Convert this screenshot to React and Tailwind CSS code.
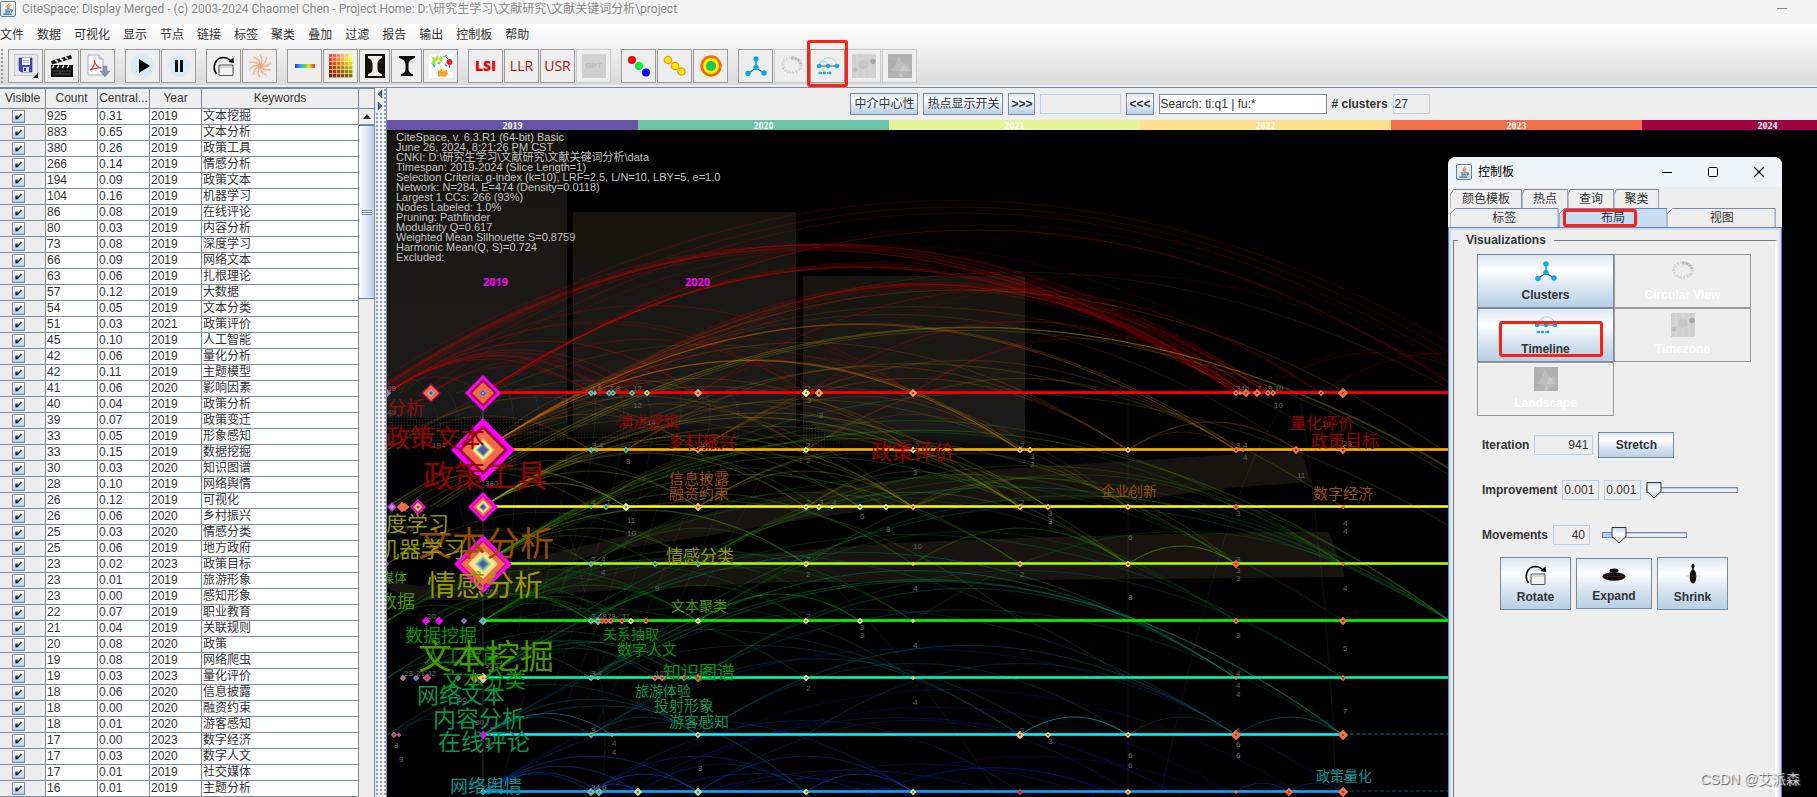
import React from "react";

const KEYWORDS = [
  [925, "0.31", 2019, "文本挖掘"], [883, "0.65", 2019, "文本分析"], [380, "0.26", 2019, "政策工具"],
  [266, "0.14", 2019, "情感分析"], [194, "0.09", 2019, "政策文本"], [104, "0.16", 2019, "机器学习"],
  [86, "0.08", 2019, "在线评论"], [80, "0.03", 2019, "内容分析"], [73, "0.08", 2019, "深度学习"],
  [66, "0.09", 2019, "网络文本"], [63, "0.06", 2019, "扎根理论"], [57, "0.12", 2019, "大数据"],
  [54, "0.05", 2019, "文本分类"], [51, "0.03", 2021, "政策评价"], [45, "0.10", 2019, "人工智能"],
  [42, "0.06", 2019, "量化分析"], [42, "0.11", 2019, "主题模型"], [41, "0.06", 2020, "影响因素"],
  [40, "0.04", 2019, "政策分析"], [39, "0.07", 2019, "政策变迁"], [33, "0.05", 2019, "形象感知"],
  [33, "0.15", 2019, "数据挖掘"], [30, "0.03", 2020, "知识图谱"], [28, "0.10", 2019, "网络舆情"],
  [26, "0.12", 2019, "可视化"], [26, "0.06", 2020, "乡村振兴"], [25, "0.03", 2020, "情感分类"],
  [25, "0.06", 2019, "地方政府"], [23, "0.02", 2023, "政策目标"], [23, "0.01", 2019, "旅游形象"],
  [23, "0.00", 2019, "感知形象"], [22, "0.07", 2019, "职业教育"], [21, "0.04", 2019, "关联规则"],
  [20, "0.08", 2020, "政策"], [19, "0.08", 2019, "网络爬虫"], [19, "0.03", 2023, "量化评价"],
  [18, "0.06", 2020, "信息披露"], [18, "0.00", 2020, "融资约束"], [18, "0.01", 2020, "游客感知"],
  [17, "0.00", 2023, "数字经济"], [17, "0.03", 2020, "数字人文"], [17, "0.01", 2019, "社交媒体"],
  [16, "0.01", 2019, "主题分析"],
];

const MENUS = ["文件", "数据", "可视化", "显示", "节点", "链接", "标签", "聚类", "叠加", "过滤", "报告", "输出", "控制板", "帮助"];

const SUMMARY = [
  "CiteSpace, v. 6.3.R1 (64-bit) Basic",
  "June 26, 2024, 8:21:26 PM CST",
  "CNKI: D:\\研究生学习\\文献研究\\文献关键词分析\\data",
  "Timespan: 2019-2024 (Slice Length=1)",
  "Selection Criteria: g-index (k=10), LRF=2.5, L/N=10, LBY=5, e=1.0",
  "Network: N=284, E=474 (Density=0.0118)",
  "Largest 1 CCs: 266 (93%)",
  "Nodes Labeled: 1.0%",
  "Pruning: Pathfinder",
  "Modularity Q=0.617",
  "Weighted Mean Silhouette S=0.8759",
  "Harmonic Mean(Q, S)=0.724",
  "Excluded:",
];

/* ---------- icons ---------- */

function JavaIcon() {
  return (
    <svg viewBox="0 0 16 16" className="size-4 shrink-0" aria-hidden="true">
      <defs>
        <linearGradient id="jv" x1="0" y1="0" x2="0" y2="1">
          <stop offset="0" stopColor="#fdfdfd" />
          <stop offset="1" stopColor="#cfdbe6" />
        </linearGradient>
      </defs>
      <rect x=".5" y=".5" width="15" height="15" rx="1.5" fill="url(#jv)" stroke="#6b8196" />
      <path d="M9 2.200c.6 1.400-2.600 2.200-1.800 4.100.3.700.9 1 .7 1.700M10.300 4.400C9 5 8.500 5.600 9 6.400c.3.600.1 1-.3 1.500" fill="none" stroke="#e87722" strokeWidth="1.100" />
      <path d="M4.800 9h5.800M5.300 10.900h4.800M3.600 13.200h7.800M10.600 9c2.400-.5 2.300 1.700.2 2.200" fill="none" stroke="#3f6a90" strokeWidth="1.200" />
    </svg>
  );
}

function Ic({ children, className = "size-6", viewBox = "0 0 24 24" }) {
  return <svg viewBox={viewBox} className={className} aria-hidden="true">{children}</svg>;
}

function SaveIcon() {
  return (
    <Ic>
      <rect x="0" y="0" width="24" height="24" fill="#ececec" />
      <rect x=".5" y=".5" width="23" height="21" fill="#e9e9ec" stroke="#c4c4c4" />
      <path d="M5 4h13v14H7l-2-2z" fill="#4448c8" stroke="#26268a" strokeWidth=".6" />
      <rect x="8" y="4" width="8" height="7" fill="#f4f4fa" />
      <path d="M9 6.500h6M9 8.500h6" stroke="#9a9ac0" strokeWidth=".8" />
      <rect x="9" y="13" width="6" height="5" fill="#dcdcf0" />
      <rect x="10" y="14" width="2" height="3" fill="#26268a" />
      <path d="M24 19v5h-5z" fill="#000" />
    </Ic>
  );
}

function ClapperIcon() {
  return (
    <Ic>
      <rect x="1" y="11" width="22" height="12" fill="#111" />
      <path d="M1 7 21 1l1 3.500L2 10.500z" fill="#111" />
      <path d="m5 6 3 2M10 4.500l3 2M15 3l3 2" stroke="#eee" strokeWidth="1.600" />
      <path d="M4 11.500l-2 2.500M9 11.500 7 14M14 11.500 12 14M19 11.500 17 14" stroke="#eee" strokeWidth="1.300" />
      <path d="M3 17h18M3 20h18M10 17v3" stroke="#777" strokeWidth=".6" />
    </Ic>
  );
}

function PdfIcon() {
  return (
    <Ic>
      <path d="M2 1h11l4 4v16H2z" fill="#f6f7fb" stroke="#aab0be" />
      <path d="M13 1v4h4" fill="#dfe3ec" stroke="#aab0be" />
      <path d="M4 16c3-2 5-6 4.500-10 .5 5 3 7.500 7 8-4-.5-8 .3-11.500 2z" fill="none" stroke="#e0504c" strokeWidth="1.300" />
      <path d="M17 12h4v5h3l-5 6-5-6h3z" fill="#8796ab" stroke="#6f7e94" strokeWidth=".5" />
    </Ic>
  );
}

function PlayIcon() {
  return (
    <Ic>
      <circle cx="11" cy="12" r="12" fill="#d8ecf3" />
      <path d="M8 5v14l11-7z" fill="#000" />
    </Ic>
  );
}

function PauseIcon() {
  return (
    <Ic>
      <circle cx="12" cy="12" r="11" fill="#d8ecf3" />
      <path d="M8 6h3v12H8zM13 6h3v12h-3z" fill="#111" />
    </Ic>
  );
}

function RotateIcon() {
  return (
    <Ic>
      <path d="M4.500 20C0 14 2.500 4 11 3.500c4 0 6.500 1.500 9 4.500" fill="none" stroke="#000" strokeWidth="1.700" />
      <path d="m21.500 3.500.5 5.500-5.500-1z" fill="#000" />
      <rect x="7" y="11" width="14" height="10.500" rx="1" fill="#f3f3f3" stroke="#555" strokeWidth="1.100" />
      <path d="M7.500 13h13" stroke="#bbb" />
    </Ic>
  );
}

function SwirlIcon() {
  return (
    <Ic>
      {[0, 36, 72, 108, 144, 180, 216, 252, 288, 324].map((a) => (
        <path key={a} d="M12 12C14 9 15 5 12 .8" transform={`rotate(${a} 12 12)`} fill="none" stroke="#f0b48c" strokeWidth="1.500" />
      ))}
      <circle cx="12" cy="12" r="2.500" fill="#eda878" />
    </Ic>
  );
}

function SpectrumIcon() {
  return (
    <Ic>
      <defs>
        <linearGradient id="spec">
          <stop offset="0" stopColor="#3a34c8" /><stop offset=".3" stopColor="#22b4e8" />
          <stop offset=".5" stopColor="#5fd35a" /><stop offset=".7" stopColor="#f2e02c" /><stop offset="1" stopColor="#e0301e" />
        </linearGradient>
      </defs>
      <rect x="2" y="10" width="20" height="4" fill="url(#spec)" />
    </Ic>
  );
}

function PaletteIcon() {
  const cells = [];
  for (let r = 0; r < 6; r++)
    for (let c = 0; c < 6; c++) {
      const k = r < 2 ? 1 : 1 - (r - 1) * 0.13;
      const red = Math.round(255 * k);
      const green = Math.round((60 + c * 39) * k);
      const blue = r < 2 ? 80 - r * 40 : 0;
      cells.push(<rect key={`${r}${c}`} x={c * 4} y={r * 4} width="3.400" height="3.400" fill={`rgb(${red},${green},${blue})`} />);
    }
  return <Ic>{cells}</Ic>;
}

const VaseLight = () => (
  <Ic className="h-6 w-5" viewBox="2 0 20 24">
    <rect x="2" width="20" height="24" fill="#14100c" />
    <path d="M5 2h14v2c-3 1-4.500 3-4.500 6v5c0 2.500 1.500 4.500 4.500 5v2H5v-2c3-.5 4.500-2.500 4.500-5v-5c0-3-1.500-5-4.500-6z" fill="#f5f1ea" />
  </Ic>
);
const VaseDark = () => (
  <Ic className="h-6 w-5" viewBox="2 0 20 24">
    <path d="M4 2h16v2c-4 1-6.500 3.500-6.500 6v5c0 2.500 1.500 4.500 4.500 5.500V22H6v-1.500c3-1 4.500-3 4.500-5.500v-5C10.500 7.500 8 5 4 4z" fill="#0a0a0a" />
  </Ic>
);

function SplashIcon() {
  return (
    <Ic>
      <rect width="24" height="24" fill="#fff" />
      <path d="m2 2 4 2 3-3 1 4-4 3 1 3-5-1 2-4zM11 2l3 2-1 4-3-2z" fill="#a4e638" />
      <circle cx="20.500" cy="8" r="3" fill="#ee1c25" /><path d="m17 3 2 2M20 14l1-3" stroke="#ee1c25" />
      <path d="m4 10 2 3M15 3l3-2M16 10l2 2" stroke="#29abe2" strokeWidth="1.600" />
      <path d="m9 17 3-2 2 2 4-1 1 4-3 3-4-1-3 1zM18 15l2 2" fill="#f7a428" />
      <circle cx="10" cy="9" r="1.500" fill="#7ac943" />
    </Ic>
  );
}

const NodesRgb = () => <Ic><circle cx="5" cy="6" r="4" fill="#ef0012" /><circle cx="12" cy="12" r="4" fill="#00ee2d" /><circle cx="19" cy="18.500" r="4" fill="#0d00ee" /></Ic>;
const NodesYellow = () => <Ic><g fill="#ffee00" stroke="#f7941d" strokeWidth="1.300"><circle cx="5" cy="6" r="3.700" /><circle cx="12" cy="12" r="3.700" /><circle cx="18.500" cy="17.500" r="3.700" /></g></Ic>;
const TargetIcon = () => <Ic><circle cx="12" cy="12" r="10.700" fill="#f26a00" /><circle cx="12" cy="12" r="8" fill="#ffef00" /><circle cx="12" cy="12" r="5" fill="#1fc45d" /></Ic>;

const ClustersIcon = () => (
  <Ic>
    <path d="M12 5v9l-8 5.500M12 14l8 5" fill="none" stroke="#4a4a4a" strokeWidth="1.100" />
    <g fill="#03aaf2"><circle cx="12" cy="5" r="2.700" /><circle cx="12" cy="13.500" r="2.700" /><circle cx="4" cy="19.500" r="2.700" /><circle cx="20" cy="19" r="2.700" /></g>
  </Ic>
);

const CircularIcon = () => (
  <Ic>
    <ellipse cx="12" cy="11" rx="9" ry="7" fill="none" stroke="#dadada" strokeWidth="3" strokeDasharray="2 1.500" />
    <ellipse cx="12" cy="11" rx="10" ry="8" fill="none" stroke="#c9c9c9" strokeWidth="1.500" strokeDasharray="1 2" />
    <path d="M11 4c5 0 9 2 9.500 6" fill="none" stroke="#b9b9b9" strokeWidth="3" strokeDasharray="2.500 1" />
  </Ic>
);

const TimelineIcon = () => (
  <Ic>
    <path d="M3 11C6 2 18 1 21 11M3 11c2-5 7-5 9 0" fill="none" stroke="#7cc7e0" strokeWidth=".9" strokeDasharray="2 .7" />
    <path d="M2 12h20" stroke="#555" /><path d="M4 19h10" stroke="#555" strokeDasharray="2 1.500" />
    <g fill="#03aaf2"><circle cx="3" cy="12" r="2.200" /><circle cx="12" cy="12" r="2.200" /><circle cx="21" cy="12" r="2.200" /><circle cx="4" cy="19" r="1.400" /><circle cx="8.500" cy="19" r="1.400" /><circle cx="14" cy="19" r="1.400" /></g>
  </Ic>
);

const TimezoneIcon = () => (
  <Ic>
    <rect width="24" height="24" fill="#d0d0d0" /><path d="M5 0v24M18 0v24M12 0v24" stroke="#dadada" />
    <circle cx="11.500" cy="10.500" r="4" fill="#c6c6c6" stroke="#bcbcbc" strokeWidth=".6" /><circle cx="21" cy="7.500" r="2.800" fill="#a8a8a8" /><circle cx="3" cy="16" r="2.500" fill="#bebebe" />
  </Ic>
);

const LandscapeIcon = () => (
  <Ic>
    <rect width="24" height="24" fill="#b0b0b0" />
    <path d="m11 2 5 9 4-2 3 9-10 3L3 16l4-4z" fill="#bdbdbd" /><path d="m16 9 5 9h-9zM12 18l3 5h-5z" fill="#c8c8c8" /><path d="M0 18h24M0 6l8 3" stroke="#a6a6a6" strokeWidth=".7" />
  </Ic>
);

const ExpandIcon = () => (
  <Ic><ellipse cx="12" cy="6.500" rx="4.500" ry="2" fill="#000" /><path d="M10.500 6h3v5h-3z" fill="#000" /><ellipse cx="12" cy="12.500" rx="11.500" ry="4.200" fill="#0b0b0b" /><path d="M0 12.500h24" stroke="#8a1c1c" strokeWidth=".5" /></Ic>
);
const ShrinkIcon = () => (
  <Ic><ellipse cx="12" cy="3" rx="1.600" ry="2.600" fill="#000" /><path d="M11.300 3h1.400v8h-1.400z" fill="#000" /><ellipse cx="12" cy="13.500" rx="3.300" ry="7" fill="#0b0b0b" /><path d="M5 13h14" stroke="#e06060" strokeWidth=".4" /></Ic>
);

const Lbl = ({ children, className }) => <span className={className}>{children}</span>;

const TOOL_GROUPS = [
  [["Save", <SaveIcon />], ["Movie", <ClapperIcon />], ["PDF", <PdfIcon />]],
  [["Play", <PlayIcon />], ["Pause", <PauseIcon />]],
  [["Rotate", <RotateIcon />], ["Swirl", <SwirlIcon />]],
  [["Spectrum", <SpectrumIcon />], ["Palette", <PaletteIcon />], ["Light background", <VaseLight />, "narrow"], ["Dark background", <VaseDark />, "narrow"], ["Splash", <SplashIcon />]],
  [
    ["LSI", <Lbl className="font-['Open_Sans',sans-serif] text-sm font-extrabold text-[#f00000]">LSI</Lbl>],
    ["LLR", <Lbl className="font-['Open_Sans',sans-serif] text-sm font-medium text-[#b01010]">LLR</Lbl>],
    ["USR", <Lbl className="font-['Open_Sans',sans-serif] text-sm font-medium text-[#b01010]">USR</Lbl>],
    ["GPT", <Lbl className="grid size-6 place-items-center bg-[#d0d0d0] text-[8px] font-bold text-[#bcbcbc]">GPT</Lbl>, "off"],
  ],
  [["Node colors", <NodesRgb />], ["Yellow nodes", <NodesYellow />], ["Rings", <TargetIcon />]],
  [["Clusters", <ClustersIcon />], ["Circular view", <CircularIcon />, "off"], ["Timeline", <TimelineIcon />, "marked"], ["Timezone", <TimezoneIcon />, "off"], ["Landscape", <LandscapeIcon />, "off"]],
];

function Toolbar() {
  return (
    <div className="flex items-center gap-[10px] pt-1 whitespace-nowrap">
      <div className="-mr-[6px] h-9 w-1 bg-[radial-gradient(#9a9a9a_1px,transparent_1px)] bg-[size:4px_4px]" />
      {TOOL_GROUPS.map((group, i) => (
        <div key={i} className="flex gap-px">
          {group.map(([name, icon, kind]) => (
            <button
              key={name}
              aria-label={name}
              disabled={kind === "off"}
              className={`relative grid h-[34px] shrink-0 place-items-center border bg-[#eee] ${kind === "narrow" ? "w-[31px]" : "w-[35px]"} ${kind === "off" ? "border-[#c8c8c8]" : "border-[#999]"}`}
            >
              {icon}
              {kind === "marked" && <span className="pointer-events-none absolute -inset-x-1 -top-[10px] -bottom-[5px] z-10 rounded-[3px] border-[3px] border-[#fb2213]" />}
            </button>
          ))}
        </div>
      ))}
    </div>
  );
}

/* ---------- keyword table ---------- */

const HEAD = "h-5 border-r border-b border-[#7a8a99] p-0 text-center font-normal leading-[19px]";
const CELL = "h-4 border-r border-b border-[#7a8a99] bg-white p-0 pl-px leading-[15px]";

function KeywordTable() {
  return (
    <section className="flex w-[375px] shrink-0 overflow-hidden border-t border-r border-[#7a8a99] bg-[#eee]">
      <table className="w-[359px] shrink-0 table-fixed border-separate border-spacing-0 self-start text-xs leading-[15px] text-[#333]">
        <colgroup>
          <col className="w-[46px]" /><col className="w-[52px]" /><col className="w-[52px]" /><col className="w-[52px]" /><col />
        </colgroup>
        <thead>
          <tr>
            <th className={HEAD}>Visible</th><th className={HEAD}>Count</th><th className={HEAD}>Central...</th><th className={HEAD}>Year</th><th className={HEAD}>Keywords</th>
          </tr>
        </thead>
        <tbody>
          {KEYWORDS.map(([count, centrality, year, word]) => (
            <tr key={word}>
              <td className="h-4 border-r border-b border-[#7a8a99] p-0">
                <label className="mx-auto grid w-[13px] -translate-x-1">
                  <input type="checkbox" defaultChecked aria-label={word} className="peer col-start-1 row-start-1 size-[13px] appearance-none border border-[#7a8a99] bg-linear-to-b from-white to-[#b8cfe5]" />
                  <svg viewBox="0 0 13 13" className="invisible col-start-1 row-start-1 size-[13px] peer-checked:visible" aria-hidden="true">
                    <path d="M4 5.500v4M5 5.500v4M5.500 8.500 9.500 4" stroke="#2a2a2a" strokeWidth="1.300" fill="none" />
                  </svg>
                </label>
              </td>
              <td className={CELL}>{count}</td>
              <td className={CELL}>{centrality}</td>
              <td className={CELL}>{year}</td>
              <td className={CELL}>{word}</td>
            </tr>
          ))}
        </tbody>
      </table>
      <div className="flex grow flex-col">
        <div className="h-5 border-b border-[#7a8a99]" />
        <button aria-label="Scroll up" className="grid h-4 place-items-center border-b border-[#7a8a99]">
          <svg viewBox="0 0 8 5" className="h-[5px] w-2"><path d="M4 0 8 5H0z" fill="#333" /></svg>
        </button>
        <div className="grid h-[174px] place-items-center border-y border-[#6382bf] bg-linear-to-r from-white via-[#dfeaf6] to-[#b8cfe5]">
          <span className="h-[5px] w-[10px] border-y border-[#6382bf] bg-[linear-gradient(#fff_1px,#6382bf_1px,#6382bf_2px,#fff_2px)]" />
        </div>
      </div>
    </section>
  );
}

/* ---------- timeline graph ---------- */

const ROW_Y = [393, 450, 507, 564, 621, 678, 735, 792];
const ROW_COLOR = ["#ff0000", "#ffb000", "#ffff00", "#b0ff00", "#00ff00", "#00ffb0", "#00ffff", "#00a8ff"];
const ROW_EDGE = ["#e00000", "#d09000", "#c8c800", "#8cc800", "#00cc00", "#00c08c", "#00c0d0", "#0088d0"];
const ARC_COLOR = ["#d40000", "#e07800", "#a8a800", "#5fb000", "#00a000", "#00a070", "#009aa8", "#0050d0"];

const T = "#66c2a5", Y = "#e6f598", A = "#fdc07a", O = "#f46d43", M = "#ff00ff", B = "#8a7fb8";

// one list for each row: [x, radius, colour]
const NODES = [
  [[387, 4, B], [591, 3, T], [595, 2, T], [609, 3, T], [613, 3, T], [632, 3, T], [647, 3, "#abdda4"], [698, 4, "#f0a080"], [806, 4, Y], [819, 4, "#f79b62"], [913, 4, "#fc8f6a"], [1236, 3, O], [1240, 2, O], [1246, 4, O], [1257, 4, O], [1268, 3, O], [1273, 3, O], [1321, 3, O], [1343, 5, O]],
  [[591, 3, T], [597, 2, T], [626, 3, T], [698, 3, "#f0a080"], [806, 3, Y], [913, 3, Y], [1020, 3, A], [1030, 3, A], [1128, 3, A], [1236, 3, O], [1243, 2, O], [1296, 4, O], [1343, 4, O]],
  [[402, 5, O], [405, 4, O], [591, 2, T], [606, 3, T], [626, 4, Y], [698, 4, A], [806, 3, Y], [819, 3, Y], [832, 2, Y], [860, 3, Y], [886, 3, Y], [913, 3, A], [1020, 3, A], [1048, 3, A], [1128, 3, A], [1236, 3, O], [1343, 2, O]],
  [[387, 2, M], [591, 3, T], [601, 2, T], [655, 3, T], [698, 3, T], [806, 3, Y], [913, 2, A], [1020, 3, A], [1128, 3, A], [1236, 4, O], [1343, 2, O]],
  [[426, 4, M], [439, 4, M], [464, 3, B], [483, 4, T], [591, 3, T], [598, 4, T], [602, 3, O], [606, 3, O], [611, 3, O], [622, 3, O], [631, 3, Y], [646, 3, O], [698, 3, Y], [806, 3, Y], [860, 3, Y], [913, 2, A], [1236, 3, O], [1343, 4, O]],
  [[403, 3, "#c08090"], [416, 3, B], [427, 4, "#d0507a"], [458, 3, "#a070a0"], [475, 5, O], [483, 5, A], [591, 3, T], [598, 2, T], [655, 3, O], [662, 3, O], [684, 3, O], [698, 4, O], [806, 3, Y], [913, 2, A], [1236, 2, O], [1343, 3, O]],
  [[394, 3, "#d0507a"], [399, 2, "#d0507a"], [483, 4, M], [591, 3, T], [612, 2, T], [698, 3, "#abdda4"], [1020, 4, A], [1048, 3, A], [1128, 3, A], [1236, 5, O], [1343, 5, O]],
  [[483, 3, T], [591, 4, T], [599, 4, T], [638, 4, "#c8e0a0"], [698, 4, "#abdda4"], [806, 3, Y], [913, 3, Y], [1020, 3, "#d0406a"], [1128, 3, A], [1236, 2, O], [1289, 4, O], [1343, 5, O]],
];

// one list for each row: [from x, to x, strength, rows to the target]
const ARCS = [
  [[483, 1236, 5], [483, 1240, 5], [483, 1246, 4], [483, 1257, 3], [483, 1268, 3], [372, 1236, 4], [374, 1246, 4], [370, 1257, 4], [376, 1268, 3], [380, 1273, 4], [384, 1240, 3], [360, 1246, 3], [487, 1465, 5], [483, 1490, 2], [400, 1515, 3], [420, 1500, 3], [375, 1530, 3], [431, 1321, 2], [387, 483, 4], [387, 591, 5], [387, 609, 4], [387, 613, 4], [387, 632, 4], [387, 647, 4], [387, 698, 5], [387, 806, 3], [387, 819, 3], [431, 591, 3], [431, 632, 3], [387, 913, 3], [609, 1273, 3], [613, 1268, 3], [632, 1257, 3], [591, 1246, 4], [595, 1236, 3], [600, 1250, 4], [620, 1268, 3], [698, 1321, 4], [806, 1236, 4], [819, 1246, 2], [913, 1240, 4], [913, 1268, 2], [1257, 1500, 3], [1246, 1510, 2], [1321, 1560, 3], [483, 806, 3], [591, 819, 2], [591, 913, 2], [698, 913, 3], [760, 1470, 2]],
  [[483, 591, 3], [483, 698, 3], [483, 806, 3], [483, 913, 3], [483, 1020, 7], [483, 1024, 4], [483, 1128, 3], [483, 1236, 5], [483, 1241, 4], [483, 1297, 2], [483, 1343, 2], [483, 1443, 3], [483, 1551, 2], [387, 483, 3], [387, 591, 3], [380, 698, 3], [387, 806, 2], [387, 1020, 2], [698, 1020, 3], [698, 1128, 3], [698, 1236, 3], [806, 1020, 2], [806, 1236, 3], [1128, 1236, 3], [1128, 1297, 4], [626, 913, 3], [626, 1128, 3], [483, 913, 3, 1], [483, 1020, 3, 1], [591, 1128, 2, 1], [483, 698, 3, -1]],
  [[387, 591, 3], [392, 626, 4], [402, 626, 3], [418, 698, 3], [387, 806, 2], [387, 913, 2], [387, 1020, 2], [483, 626, 6], [483, 698, 4], [483, 806, 4], [483, 819, 3], [483, 860, 3], [483, 886, 3], [483, 913, 5], [483, 1020, 5], [483, 1048, 4], [483, 1128, 3], [483, 1343, 3], [430, 1510, 5], [436, 1512, 4], [440, 1500, 3], [591, 913, 3], [591, 1020, 3], [698, 913, 4], [698, 1020, 3], [698, 1048, 4], [806, 1128, 3], [913, 1048, 3], [913, 1236, 3, 1], [806, 1020, 3], [626, 860, 3], [483, 1128, 3, 1]],
  [[387, 483, 3], [387, 591, 3], [387, 698, 3], [483, 591, 3], [483, 655, 3], [483, 698, 4], [483, 806, 6], [483, 913, 4], [483, 1020, 4], [483, 1128, 4], [483, 1236, 4], [483, 1343, 3], [483, 1510, 3], [591, 1020, 3], [698, 1128, 4], [698, 1236, 3], [913, 1128, 4], [1128, 1236, 8], [591, 806, 3], [806, 1343, 3], [483, 1020, 3, 1], [698, 1450, 3, 1], [483, 1450, 4, 1]],
  [[387, 483, 5], [387, 591, 4], [426, 591, 6], [439, 598, 5], [464, 606, 4], [483, 591, 5], [483, 631, 4], [483, 698, 5], [387, 698, 4], [387, 622, 4], [483, 806, 3], [483, 860, 3], [698, 860, 8], [483, 913, 4], [483, 1236, 3], [483, 1343, 3], [591, 806, 4], [591, 913, 3], [698, 1450, 4], [591, 1450, 3], [698, 1236, 3], [439, 698, 3], [913, 1450, 3], [387, 1343, 3, -1]],
  [[387, 483, 4], [403, 591, 4], [416, 698, 4], [427, 655, 4], [458, 684, 4], [483, 662, 4], [483, 698, 5], [387, 806, 3], [483, 913, 3], [483, 1236, 5], [591, 1236, 6], [698, 1236, 4], [698, 1343, 3], [591, 1343, 5, 1], [600, 1343, 5, 1], [483, 1450, 4, -1], [483, 1343, 3], [387, 1128, 3], [591, 1450, 4, -1]],
  [[387, 483, 3], [394, 698, 3], [483, 591, 5], [483, 612, 8], [483, 698, 4], [591, 698, 4], [483, 1020, 3], [591, 1048, 3], [698, 1128, 3], [591, 1343, 3], [483, 1236, 3], [806, 1236, 3], [1020, 1128, 11], [1128, 1236, 4], [1236, 1343, 5], [698, 1236, 4], [387, 1020, 3], [483, 806, 4, 1]],
  [[483, 591, 6], [483, 599, 6], [483, 638, 6], [483, 698, 6], [591, 638, 7], [591, 698, 7], [591, 806, 4], [638, 806, 4], [698, 913, 5], [806, 913, 7], [591, 1020, 4], [483, 913, 4], [698, 1128, 3], [1236, 1289, 5], [1289, 1343, 5], [483, 1343, 3]],
];

// deep blue and violet arcs of the clusters below the visible ones
const LOW_ARCS = [
  [560, 1236, 830, "#1414c8", 4], [590, 1280, 822, "#1414c8", 3], [520, 1180, 880, "#2020b0", 4], [600, 1236, 870, "#2a10b0", 4],
  [640, 1128, 870, "#5a008c", 4], [700, 1240, 880, "#5a008c", 3], [806, 1180, 830, "#1010d0", 6], [560, 1343, 820, "#1a1aa0", 3],
  [720, 1343, 860, "#3c00a0", 3], [590, 1020, 850, "#1818c0", 4], [560, 960, 840, "#1030c0", 4],
];

// [text, x, baseline, size, colour, anchor]
const LABELS = [
  ["政策分析", 425, 415, 19, "#960a0a", "end"], ["政策文本", 485, 447, 25, "#960000", "end"], ["政策工具", 423, 487, 31, "#960000"],
  ["文本分析", 418, 556, 34, "#964b00"], ["深度学习", 449, 531, 21, "#969600", "end"], ["机器学习", 465, 557, 22, "#969600", "end"],
  ["情感分析", 427, 596, 29, "#969600"], ["社交媒体", 407, 582, 13, "#4b9600", "end"], ["大数据", 415, 608, 18, "#4b9600", "end"],
  ["数据挖掘", 405, 642, 18, "#009600"], ["人工智能", 423, 663, 20, "#008200"], ["文本挖掘", 418, 669, 34, "#4b9600"],
  ["文本分类", 442, 687, 21, "#009600"], ["网络文本", 417, 703, 22, "#009650"], ["内容分析", 433, 727, 23, "#009650"],
  ["在线评论", 438, 750, 23, "#009650"], ["网络舆情", 450, 793, 18, "#009696"], ["演进逻辑", 618, 427, 15, "#960000"],
  ["乡村振兴", 668, 448, 17, "#960000"], ["信息披露", 669, 484, 15, "#964b00"], ["融资约束", 669, 499, 15, "#964b00"],
  ["情感分类", 666, 562, 17, "#969600"], ["文本聚类", 671, 611, 14, "#4b9600"], ["关系抽取", 603, 639, 14, "#009600"],
  ["数字人文", 617, 655, 15, "#009600"], ["知识图谱", 663, 679, 18, "#009600"], ["旅游体验", 635, 696, 14, "#009650"],
  ["投射形象", 654, 711, 15, "#009650"], ["游客感知", 669, 727, 15, "#009650"], ["政策评价", 871, 459, 21, "#960000"],
  ["企业创新", 1101, 496, 14, "#964b00"], ["量化评价", 1290, 429, 16, "#960000"], ["政策目标", 1311, 447, 17, "#960000"],
  ["数字经济", 1313, 499, 15, "#964b00"], ["政策量化", 1316, 781, 14, "#009696"],
];

// small citation counts: [x, baseline, text]
const COUNTS = [
  [387, 391, "39"], [387, 415, "40"], [591, 391, "3 6"], [609, 391, "7 8"], [633, 391, "12"], [633, 408, "12"], [647, 425, "14"],
  [432, 448, "194"], [592, 448, "3 4"], [698, 447, "26"], [626, 464, "8"], [485, 486, "380"], [591, 505, "4"], [606, 505, "7"],
  [700, 481, "18"], [698, 497, "18"], [627, 523, "11"], [627, 536, "10"], [405, 531, "73"], [421, 556, "104"], [591, 562, "3"],
  [601, 562, "4"], [601, 575, "4"], [655, 591, "9"], [485, 594, "266"], [427, 619, "20"], [591, 619, "3"], [598, 619, "6878"],
  [622, 619, "11"], [485, 668, "925"], [404, 676, "23"], [416, 676, "21"], [427, 676, "42"], [591, 676, "3 4"], [655, 676, "12"],
  [698, 676, "30"], [458, 702, "66"], [475, 725, "80"], [485, 748, "86"], [591, 733, "3"], [612, 746, "4"], [612, 755, "4"],
  [394, 748, "8"], [399, 762, "9"], [698, 725, "18"], [698, 771, "8"], [591, 790, "34 6"], [485, 790, "28"],
  [806, 391, "2"], [807, 403, "3"], [819, 418, "8"], [806, 448, "2"], [806, 463, "2"], [913, 475, "3"], [1020, 448, "2"],
  [1030, 459, "3"], [1030, 467, "3"], [1236, 391, "346"], [1257, 391, "7"], [1268, 391, "9 10"], [1274, 408, "10"], [1322, 427, "19"],
  [1236, 448, "3"], [1243, 448, "4"], [1243, 460, "4"], [1343, 446, "23"], [1297, 478, "11"], [806, 505, "2"], [819, 505, "3"],
  [832, 505, "4"], [860, 519, "6"], [886, 532, "8"], [913, 549, "10"], [1020, 505, "2"], [1048, 516, "3"], [1048, 524, "3"],
  [1128, 495, "8"], [1128, 540, "6"], [1236, 516, "3"], [1343, 526, "4"], [1343, 534, "4"], [806, 562, "2"], [806, 577, "2"],
  [1020, 577, "2"], [1236, 562, "3"], [1236, 573, "3"], [1236, 581, "3"], [913, 591, "4"], [1128, 600, "8"], [1343, 591, "4"],
  [806, 619, "2"], [860, 630, "3"], [860, 638, "3"], [913, 648, "4"], [1236, 638, "3"], [1343, 651, "5"], [806, 691, "2"],
  [913, 705, "4"], [1236, 676, "4"], [1236, 688, "4"], [1236, 697, "4"], [1343, 714, "7"], [1020, 733, "2"], [1048, 744, "3"],
  [1128, 758, "6"], [1128, 768, "6"], [1236, 733, "6"], [1236, 747, "6"], [1236, 758, "6"], [806, 796, "2"], [1343, 780, "16"],
];

// rings of the large nodes: [x, row, [radius, colour]...]
const RINGS = [
  [431, 0, [10, "#9e0142"], [8, "#f06a44"], [4, "#a9a9b5"], [2, "#5e4fa2"]],
  [483, 0, [18, M], [14, "#9e0142"], [11, "#f06a44"], [4, "#66a5b5"], [3, "#5e4fa2"], [1, "#fff"]],
  [483, 1, [32, M], [25, "#9e0142"], [21, "#f06a44"], [12, "#fdae61"], [10, "#fbf29a"], [7, "#66c2a5"], [5, "#5e4fa2"]],
  [483, 2, [15, M], [11, "#b8104a"], [10, "#f06a44"], [7, "#fee08b"], [4, "#66c2a5"], [3, "#5e4fa2"]],
  [483, 3, [29, M], [24, "#b8104a"], [22, "#f06a44"], [15, "#fee08b"], [8, "#8fd0a4"], [6, "#46a8a5"], [4, "#5e4fa2"]],
  [392, 2, [5, M], [3, "#66c2a5"]],
  [418, 2, [8, M], [6, "#9e0142"], [5, "#f9a25c"], [3, "#fbf29a"], [2, "#5e4fa2"]],
];

const diamond = (x, y, r, w = r) => `M${x} ${y - r}L${x + w} ${y}L${x} ${y + r}L${x - w} ${y}Z`;
const arc = (x1, y1, x2, y2) => `M${x1} ${y1}Q${(x1 + x2) / 2} ${(y1 + y2) / 2 - (x2 - x1) / 3} ${x2} ${y2}`;

function TimelineGraph() {
  return (
    <svg viewBox="387 130 1430 667" width="1430" height="667" className="absolute top-0 left-0" role="img" aria-label="Keyword timeline">
      <defs>
        <linearGradient id="slab" x1="0" y1="0" x2="0" y2="1">
          <stop offset="0" stopColor="#17140f" /><stop offset=".6" stopColor="#1b1a17" /><stop offset=".9" stopColor="#1a1a1a" /><stop offset="1" stopColor="#080808" />
        </linearGradient>
        <pattern id="dots" width="3" height="3" patternUnits="userSpaceOnUse"><rect width="2" height="2" fill="#000" /></pattern>
      </defs>
      <rect x="387" y="132" width="180" height="312" fill="url(#slab)" />
      <rect x="573" y="212" width="223" height="228" fill="url(#slab)" />
      <rect x="803" y="276" width="222" height="172" fill="url(#slab)" />
      <path d="M387 418H520L560 434 620 432 796 446V456H387z" fill="url(#dots)" />
      <path d="M803 418 812 424 845 448H803z" fill="url(#dots)" />
      <path d="M400 592 520 560 597 543 647 530 720 510 780 497 851 485 999 469 1240 454 1302 452 1311 482 1226 488 1159 497 1003 502 869 510 780 523 700 537 613 550 540 570 500 590z" fill="#171410" />
      <path d="M387 580 447 592 520 574 600 562 780 552 892 543 1048 537 1262 532 1329 532 1345 577 1137 579 869 582 780 582 580 592 480 600 413 600 387 588z" fill="#171410" />

      <g fill="none" stroke="#fff" strokeOpacity=".06">
        {[0, 1, 2, 3, 4, 5, 6, 7, 8, 9, 10, 11].map((i) => (
          <path key={i} d={`M${400 + i * 28} 393Q${430 + i * 34} ${330 + (i % 3) * 20} ${470 + i * 12} ${560 + i * 18}`} />
        ))}
        <path d="M1128 400V797M1300 393Q1240 420 1160 797M806 560Q900 640 1000 797M560 500Q620 700 600 797M1300 395Q1330 600 1336 797M698 393Q560 500 500 797M640 700Q700 600 760 480" />
      </g>
      <path d="M483 393V797" stroke="#fff" strokeOpacity=".18" />

      {LOW_ARCS.map(([x1, x2, y, color, s], i) => (
        <path key={i} d={arc(x1, y, x2, y)} fill="none" stroke={color} strokeOpacity={s / 10} />
      ))}
      {ARCS.map((list, row) =>
        list.map(([x1, x2, s, step = 0], i) => (
          <path key={`${row}-${i}`} d={arc(x1, ROW_Y[row], x2, ROW_Y[row + step])} fill="none" stroke={ARC_COLOR[row]} strokeOpacity={s / 15} strokeWidth="1.200" />
        ))
      )}

      {ROW_Y.map((y, row) => {
        const end = row < 6 ? 1460 : 1343;
        return (
          <g key={y}>
            <rect x="483" y={y - 2} width={end - 483} height="3" fill={ROW_EDGE[row]} />
            <rect x="483" y={y - 1} width={end - 483} height="1" fill={ROW_COLOR[row]} />
            {row >= 6 && <path d={`M1350 ${y - 1}H1460`} stroke={ROW_EDGE[row]} strokeOpacity=".6" strokeDasharray="4 2" />}
          </g>
        );
      })}

      {RINGS.map(([x, row, ...rings]) =>
        rings.map(([r, color]) => <path key={`${x}${row}${r}`} d={diamond(x, ROW_Y[row], r)} fill={color} />)
      )}
      {NODES.map((list, row) =>
        list.map(([x, r, color]) => (
          <g key={`${row}-${x}`}>
            <path d={diamond(x, ROW_Y[row], r)} fill={color} stroke={color} strokeWidth=".5" />
            {r > 2 && <path d={diamond(x, ROW_Y[row], 1)} fill={x < 600 ? "#5e4fa2" : "#222"} />}
          </g>
        ))
      )}

      <g fontFamily="'Liberation Sans', sans-serif" fontSize="8" fill="#666">
        {COUNTS.map(([x, y, text]) => <text key={`${x}-${y}`} x={x} y={y}>{text}</text>)}
      </g>
      <g fontFamily="'Noto Sans CJK SC', sans-serif">
        {LABELS.map(([text, x, y, size, color, anchor = "start"]) => (
          <text key={`${text}${x}`} x={x} y={y} fontSize={size} fill={color} textAnchor={anchor}>{text}</text>
        ))}
      </g>
      <g fontFamily="'Open Sans', sans-serif" fontSize="11" fontWeight="700" fill="#ff00ff">
        <text x="483" y="286">2019</text>
        <text x="685" y="286">2020</text>
      </g>
    </svg>
  );
}

const STEEL = "border border-[#7a8a99] bg-[linear-gradient(#dde8f3,#fff_30%,#dbe6f2_60%,#b8cfe5)] text-[#333]";

const YEARS = [
  ["2019", "bg-[#6554a8]"], ["2020", "bg-[#6bc4a7]"], ["2021", "bg-[#e6f598]"],
  ["2022", "bg-[#fedf8b]"], ["2023", "bg-[#f46f49]"], ["2024", "bg-[#9e0142]"],
];

function GraphPane() {
  return (
    <main className="flex min-w-0 grow flex-col overflow-hidden border-l border-[#7a8a99] bg-[#eee]">
      <div className="flex h-8 w-[1506px] shrink-0 items-center justify-center gap-[5px] text-xs text-[#333]">
        <button className={`${STEEL} h-[22px] px-[3px]`}>中介中心性</button>
        <button className={`${STEEL} h-[22px] px-[3px]`}>热点显示开关</button>
        <button className={`${STEEL} h-[22px] px-[2px] font-bold`}>&gt;&gt;&gt;</button>
        <input aria-label="Threshold" readOnly className="h-5 w-[81px] border border-[#b8cfe5]" />
        <button className={`${STEEL} h-[22px] px-[2px] font-bold`}>&lt;&lt;&lt;</button>
        <input aria-label="Search" defaultValue="Search: ti:q1 | fu:*" className="h-5 w-[168px] border border-[#7a8a99] bg-white pl-px" />
        <label htmlFor="clusters" className="font-bold"># clusters</label>
        <input id="clusters" readOnly defaultValue="27" className="h-5 w-[37px] border border-[#b8cfe5] pl-px" />
      </div>
      <div className="flex shrink-0">
        {YEARS.map(([year, color]) => (
          <div key={year} className={`h-[10px] w-[251px] shrink-0 text-center font-['Liberation_Serif',serif] text-[10px] leading-[12px] font-bold text-white ${color}`}>{year}</div>
        ))}
      </div>
      <div className="relative grow overflow-hidden bg-black">
        <TimelineGraph />
        <div className="relative pl-[9px] pt-[2px] font-['Liberation_Sans','Noto_Sans_CJK_SC',sans-serif] text-[11px] leading-[10px] whitespace-nowrap text-[#c4c4c4]">
          {SUMMARY.map((line) => <p key={line} className="h-[10px]">{line}</p>)}
        </div>
      </div>
    </main>
  );
}

/* ---------- control panel window ---------- */

function Tab({ children, className, selected }) {
  return (
    <button role="tab" aria-selected={!!selected} className={`relative h-[19px] ${className}`}>
      <svg viewBox="0 0 100 19" preserveAspectRatio="none" className="absolute inset-0 size-full" aria-hidden="true">
        <path d="M0 20V6L5 .5H99.500V20" vectorEffect="non-scaling-stroke" fill={selected ? "#c8ddf2" : "#eee"} stroke={selected ? "#6382bf" : "#7a8a99"} />
      </svg>
      <span className="relative">{children}</span>
      {selected && <span className="pointer-events-none absolute top-px right-[30px] bottom-0 left-1 rounded-[3px] border-[3px] border-[#fb2213]" />}
    </button>
  );
}

function Slider({ label, value, width, thumb, fill }) {
  return (
    <span className={`relative flex h-4 items-center ${width}`}>
      <input type="range" aria-label={label} defaultValue={value} className="peer h-[6px] w-full appearance-none border border-[#7a8a99] bg-[#eee] shadow-[inset_0_1px_#b8cfe5] [&::-webkit-slider-thumb]:size-4 [&::-webkit-slider-thumb]:appearance-none [&::-webkit-slider-thumb]:opacity-0" />
      {fill && <span className="pointer-events-none absolute left-0 h-[6px] w-3 border border-[#6382bf] bg-[#b8cfe5]" />}
      <svg viewBox="0 0 16 17" className={`pointer-events-none absolute top-0 h-[17px] w-4 ${thumb}`} aria-hidden="true">
        <path d="M1 .5h14V9.500L8 16 1 9.500z" fill="url(#thumb)" stroke="#333" />
        <defs><linearGradient id="thumb" x1="0" y1="0" x2="0" y2="1"><stop offset="0" stopColor="#c5d8ec" /><stop offset=".4" stopColor="#fff" /><stop offset="1" stopColor="#b8cfe5" /></linearGradient></defs>
      </svg>
    </span>
  );
}

const FIELD = "h-5 border border-[#b8cfe5] pr-1 text-right font-normal";

function ViewButton({ name, icon, off, marked }) {
  return (
    <button disabled={off} className={`relative flex h-[54px] flex-col items-center justify-between pt-1 pb-1 font-bold ${off ? "border border-[#999] text-white" : STEEL}`}>
      {icon}
      <span className="leading-4">{name}</span>
      {marked && <span className="pointer-events-none absolute top-[12px] right-[10px] bottom-1 left-[21px] rounded-[3px] border-[3px] border-[#fb2213]" />}
    </button>
  );
}

function ControlPanel() {
  return (
    <section className="absolute top-[157px] right-[35px] bottom-0 flex w-[334px] flex-col overflow-hidden rounded-t-lg bg-[#eee] text-xs text-[#333]" role="dialog" aria-label="控制板">
      <header className="flex h-[30px] shrink-0 items-center gap-[6px] bg-[#eff4f9] pr-[17px] pb-px pl-2 text-black">
        <JavaIcon />
        <h2 className="grow">控制板</h2>
        <div className="flex gap-[34px]">
          <button aria-label="Minimize"><svg viewBox="0 0 12 12" className="size-3"><path d="M1 6.500h10" stroke="#000" /></svg></button>
          <button aria-label="Maximize"><svg viewBox="0 0 12 12" className="size-3"><rect x="1.500" y="1.500" width="9" height="9" rx="1" fill="none" stroke="#000" /></svg></button>
          <button aria-label="Close"><svg viewBox="0 0 12 12" className="size-3"><path d="m1 1 10 10M11 1 1 11" stroke="#000" strokeWidth="1.100" /></svg></button>
        </div>
      </header>
      <div role="tablist" className="px-[2px] pt-[2px]">
        <div className="flex">
          <Tab className="w-[72px]">颜色模板</Tab><Tab className="w-[46px]">热点</Tab><Tab className="w-[46px]">查询</Tab><Tab className="w-[45px]">聚类</Tab>
        </div>
        <div className="flex pr-1">
          <Tab className="grow basis-0">标签</Tab><Tab className="grow basis-0" selected>布局</Tab><Tab className="grow basis-0">视图</Tab>
        </div>
      </div>
      <div className="grow border-x border-t border-[#6382bf]">
        <div className="flex h-full flex-col border-x-2 border-t-2 border-[#c8ddf2] pt-[2px] pr-[2px] pl-[2px]">
          <fieldset className="min-w-0 grow border-t border-r-2 border-l border-t-[#777] border-r-white border-l-[#777] px-7">
            <legend className="-ml-6 px-2 leading-4 font-bold">Visualizations</legend>
            <div className="mx-[-5px] mt-[6px] grid w-[274px] grid-cols-2">
              <ViewButton name="Clusters" icon={<ClustersIcon />} />
              <ViewButton name="Circular View" icon={<CircularIcon />} off />
              <ViewButton name="Timeline" icon={<TimelineIcon />} marked />
              <ViewButton name="Timezone" icon={<TimezoneIcon />} off />
              <ViewButton name="Landscape" icon={<LandscapeIcon />} off />
            </div>
            <div className="mt-4 flex h-[26px] items-center gap-[5px] font-bold">
              <label htmlFor="iteration">Iteration</label>
              <input id="iteration" readOnly defaultValue="941" className={`${FIELD} w-[59px]`} />
              <button className={`${STEEL} h-[26px] w-[76px]`}>Stretch</button>
            </div>
            <div className="mt-[19px] flex h-[26px] items-center gap-[5px] font-bold">
              <label htmlFor="improvement">Improvement</label>
              <input id="improvement" readOnly defaultValue="0.001" className={`${FIELD} w-[37px]`} />
              <input aria-label="Improvement limit" readOnly defaultValue="0.001" className={`${FIELD} w-[37px]`} />
              <Slider label="Improvement" value={0} width="w-[92px]" thumb="left-0" />
            </div>
            <div className="mt-[19px] flex h-[26px] items-center gap-[5px] font-bold">
              <label htmlFor="movements">Movements</label>
              <input id="movements" readOnly defaultValue="40" className={`${FIELD} mr-[7px] w-[37px]`} />
              <Slider label="Movements" value={15} width="w-[85px]" thumb="left-[9px]" fill />
            </div>
            <div className="mt-[9px] flex items-center gap-[5px] pl-[18px] font-bold">
              <button className={`${STEEL} flex h-[53px] w-[71px] flex-col items-center justify-between pt-[5px] pb-1`}><RotateIcon />Rotate</button>
              <button className={`${STEEL} flex h-[51px] w-[76px] flex-col items-center justify-between pt-[5px] pb-1`}><ExpandIcon />Expand</button>
              <button className={`${STEEL} flex h-[53px] w-[71px] flex-col items-center justify-between pt-[5px] pb-1`}><ShrinkIcon />Shrink</button>
            </div>
          </fieldset>
        </div>
      </div>
    </section>
  );
}

export default function App() {
  return (
    <div className="relative flex h-screen flex-col overflow-hidden bg-[#eee] font-['Liberation_Sans','Noto_Sans_CJK_SC',sans-serif] text-xs">
      <header className="flex h-6 shrink-0 items-center bg-[#f3f3f3] pr-[30px] pb-[6px]">
        <JavaIcon />
        <h1 className="grow pl-[6px] font-['Roboto','Noto_Sans_CJK_SC',sans-serif] text-xs leading-4 whitespace-nowrap text-[#8a8a8a]">
          CiteSpace: Display Merged - (c) 2003-2024 Chaomei Chen - Project Home: D:\研究生学习\文献研究\文献关键词分析\project
        </h1>
        <button aria-label="Minimize"><svg viewBox="0 0 10 10" className="size-[10px]"><path d="M0 4.500h10" stroke="#888" /></svg></button>
      </header>
      <div className="h-[61px] shrink-0 bg-linear-to-b from-white to-[#dadada]">
        <nav className="flex h-5 items-center gap-[13px] pt-[2px] text-[#333]">
          {MENUS.map((name) => <button key={name} className="whitespace-nowrap">{name}</button>)}
        </nav>
        <Toolbar />
      </div>
      <div className="mt-[2px] flex min-h-0 grow border-t border-[#7a8a99]">
        <KeywordTable />
        <div className="w-[11px] shrink-0 bg-[#eee] bg-[radial-gradient(#8f9fb0_1px,transparent_1px)] bg-[size:4px_4px] px-px">
          <svg viewBox="0 0 8 24" className="h-6 w-2 bg-[#eee]" aria-hidden="true"><path d="M6 2v8L2 6zM2 14v8l4-4z" fill="#3c62b0" stroke="#333" strokeWidth=".4" /></svg>
        </div>
        <GraphPane />
      </div>
      <ControlPanel />
      <p className="pointer-events-none absolute right-[17px] bottom-2 text-sm leading-5 text-white/70 [text-shadow:1px_1px_1px_#555]">CSDN @艾派森</p>
    </div>
  );
}
